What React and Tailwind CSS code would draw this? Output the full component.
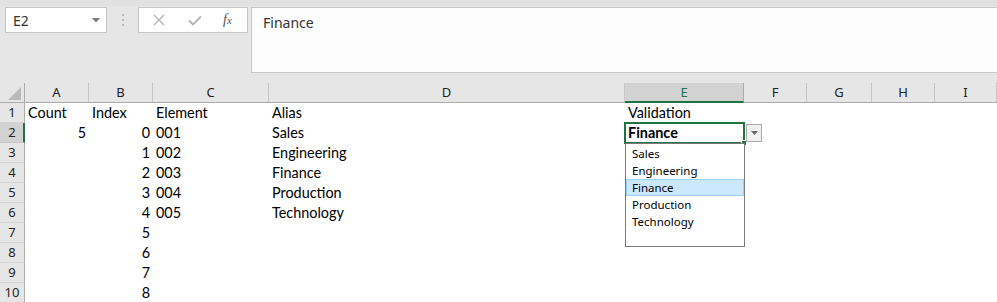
import React from 'react';

const cols = [
  { key: 'A', w: 'w-[64px]' },
  { key: 'B', w: 'w-[64px]' },
  { key: 'C', w: 'w-[116px]' },
  { key: 'D', w: 'w-[356px]' },
  { key: 'E', w: 'w-[119px]' },
  { key: 'F', w: 'w-[63px]' },
  { key: 'G', w: 'w-[65px]' },
  { key: 'H', w: 'w-[63px]' },
  { key: 'I', w: 'flex-1' },
];

// [A, B, C, D, E] — numbers right aligned, text left
const data = [
  [['Count', 'l'], ['Index', 'l'], ['Element', 'l'], ['Alias', 'l'], ['Validation', 'l']],
  [['5', 'r'], ['0', 'r'], ['001', 'l'], ['Sales', 'l'], ['', 'l']],
  [['', 'l'], ['1', 'r'], ['002', 'l'], ['Engineering', 'l'], ['', 'l']],
  [['', 'l'], ['2', 'r'], ['003', 'l'], ['Finance', 'l'], ['', 'l']],
  [['', 'l'], ['3', 'r'], ['004', 'l'], ['Production', 'l'], ['', 'l']],
  [['', 'l'], ['4', 'r'], ['005', 'l'], ['Technology', 'l'], ['', 'l']],
  [['', 'l'], ['5', 'r'], ['', 'l'], ['', 'l'], ['', 'l']],
  [['', 'l'], ['6', 'r'], ['', 'l'], ['', 'l'], ['', 'l']],
  [['', 'l'], ['7', 'r'], ['', 'l'], ['', 'l'], ['', 'l']],
  [['', 'l'], ['8', 'r'], ['', 'l'], ['', 'l'], ['', 'l']],
];

const options = ['Sales', 'Engineering', 'Finance', 'Production', 'Technology'];

const cellFont = { fontFamily: 'Lato, "Open Sans", sans-serif' };
const uiFont = { fontFamily: '"Noto Sans", "Open Sans", sans-serif' };

const FormulaBar = () => (
  <div className="h-[83px] bg-[#e6e6e6] relative">
    <div className="h-[6px] bg-[#e1e1e1]" />
    <div className="flex items-start pt-px">
      <div className="ml-[5px] w-[102px] h-[26px] bg-white border border-[#c6c6c6] flex items-center justify-between pl-[7px] pr-[6px]">
        <span className="text-[14px] text-[#333]" style={uiFont}>E2</span>
        <svg width="8" height="5" viewBox="0 0 8 5"><path d="M0 0h8L4 4.5z" fill="#7a7a7a" /></svg>
      </div>
      <div className="w-[31px] h-[26px] flex flex-col items-center justify-center gap-[3px]">
        <span className="w-[2px] h-[2px] bg-[#b8b8b8]" />
        <span className="w-[2px] h-[2px] bg-[#b8b8b8]" />
        <span className="w-[2px] h-[2px] bg-[#b8b8b8]" />
      </div>
      <div className="w-[110px] h-[26px] bg-white border border-[#c6c6c6] flex items-center">
        <svg className="ml-[14px]" width="12" height="12" viewBox="0 0 12 12">
          <path d="M1 1l10 10M11 1L1 11" stroke="#b4b4b4" strokeWidth="1.3" />
        </svg>
        <svg className="ml-[23px]" width="14" height="11" viewBox="0 0 14 11">
          <path d="M1 5.5l4 4L13 1.5" stroke="#b4b4b4" strokeWidth="1.8" fill="none" />
        </svg>
        <span className="ml-[21px] text-[14px] italic text-[#555] leading-none" style={{ fontFamily: '"Liberation Serif", "DejaVu Serif", serif' }}>
          f<span className="text-[11px]">x</span>
        </span>
      </div>
      <div className="ml-[3px] flex-1 h-[66px] bg-[#fdfdfd] border border-[#c6c6c6] border-r-0 pl-[11px] pt-[2px]">
        <span className="text-[14px] leading-[20px] text-[#333]" style={uiFont}>Finance</span>
      </div>
    </div>
  </div>
);

const ColumnHeader = () => (
  <div className="flex h-[20px] bg-[#e6e6e6] border-b border-[#ababab]" style={uiFont}>
    <div className="w-[25px] border-r border-[#ababab] relative">
      <svg className="absolute right-[3px] bottom-[2px]" width="13" height="13" viewBox="0 0 13 13">
        <path d="M13 0V13H0z" fill="#b9b9b9" />
      </svg>
    </div>
    {cols.map((c) => (
      <div
        key={c.key}
        className={`${c.w} flex items-center justify-center text-[13px] ${
          c.key === 'E'
            ? 'bg-[#d2d2d2] text-[#217346] border-b-2 border-[#217346] -mb-px pt-[2px] border-r border-r-[#ababab]'
            : 'text-[#222] border-r border-[#c6c6c6]'
        }`}
      >
        {c.key}
      </div>
    ))}
  </div>
);

const Row = ({ n, cells }) => (
  <div className="flex h-[20px]">
    <div
      className={`w-[25px] flex items-center justify-center text-[13px] border-b ${
        n === 2
          ? 'bg-[#d2d2d2] border-r-2 border-r-[#217346] border-b-[#c6c6c6] pl-px'
          : 'bg-[#e6e6e6] border-r border-r-[#ababab] border-b-[#d4d4d4]'
      } text-[#222]`}
      style={uiFont}
    >
      {n}
    </div>
    {cols.map((c, i) => {
      const cell = cells[i] || ['', 'l'];
      return (
        <div
          key={c.key}
          className={`${c.w} bg-white flex items-center px-[3px] text-[14.4px] text-black whitespace-nowrap ${
            cell[1] === 'r' ? 'justify-end' : 'justify-start'
          }`}
          style={cellFont}
        >
          {cell[0]}
        </div>
      );
    })}
  </div>
);

export default function App() {
  return (
    <div className="w-[997px] h-[302px] overflow-hidden bg-white relative">
      <FormulaBar />
      <ColumnHeader />
      <div className="relative">
        {data.map((cells, i) => (
          <Row key={i} n={i + 1} cells={cells} />
        ))}

        {/* active cell E2 */}
        <div className="absolute left-[624px] top-[19px] w-[121px] h-[22px] border-2 border-[#217346] flex items-center pl-[2px]">
          <span className="text-[14.4px] font-bold text-black" style={cellFont}>Finance</span>
          <span className="absolute -right-[4px] -bottom-[4px] w-[6px] h-[6px] bg-[#217346] border border-white" />
        </div>

        {/* dropdown button */}
        <div className="absolute left-[746px] top-[21px] w-[16px] h-[18px] bg-[#f1f1f1] border border-[#ababab] flex items-center justify-center">
          <svg width="7" height="4" viewBox="0 0 7 4"><path d="M0 0h7L3.5 4z" fill="#666" /></svg>
        </div>

        {/* validation list */}
        <div className="absolute left-[625px] top-[40px] w-[120px] h-[104px] bg-white border border-[#7a7a7a] pt-[1px]" style={uiFont}>
          {options.map((o) => (
            <div
              key={o}
              className={`h-[17px] flex items-center text-[11.5px] text-black ${
                o === 'Finance' ? 'bg-[#cce8ff] border border-[#99d1ff] pl-[5px]' : 'pl-[6px]'
              }`}
            >
              {o}
            </div>
          ))}
        </div>
      </div>
    </div>
  );
}
